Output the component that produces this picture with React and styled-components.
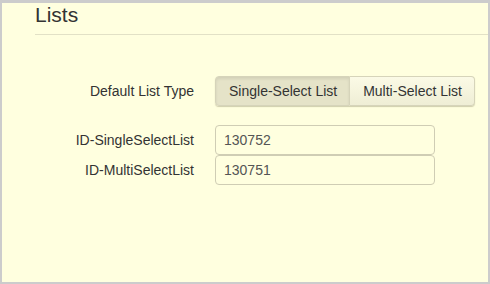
import React, { useState } from "react";
import styled, { createGlobalStyle } from "styled-components";

const Global = createGlobalStyle`
  body {
    margin: 0;
    background: #ffffdf;
    font-family: "Liberation Sans", Arial, sans-serif;
  }
`;

const Frame = styled.div`
  box-sizing: border-box;
  width: 490px;
  height: 284px;
  background: #ffffdf;
  border-style: solid;
  border-color: #cccccc;
  border-width: 3px 2px 2px 2px;
  color: #333333;
`;

const Header = styled.div`
  margin-left: 33px;
  height: 31px;
  border-bottom: 1px solid #e2e1c6;
`;

const Title = styled.h1`
  margin: 0;
  font-weight: normal;
  font-size: 21px;
  line-height: 24px;
`;

const Form = styled.div`
  display: grid;
  grid-template-columns: 192px auto;
  column-gap: 21px;
  align-items: center;
  padding-top: 41px;
`;

const Label = styled.div`
  text-align: right;
  font-size: 14px;
  margin-top: ${(p) => p.$top || 0}px;
`;

const Group = styled.div`
  display: inline-flex;
  justify-self: start;
  border-radius: 4px;
  box-shadow: 0 1px 1px rgba(120, 115, 80, 0.35);
  margin-bottom: 19px;
`;

const Choice = styled.button`
  font-family: inherit;
  font-size: 14px;
  color: #333;
  height: 30px;
  padding: 0 12px 0 13px;
  border: 1px solid #d6d4ba;
  cursor: pointer;
  background: ${(p) =>
    p.$active ? "#e5e3c8" : "linear-gradient(#fbfae6, #efeed5)"};
  box-shadow: ${(p) => (p.$active ? "inset 0 2px 3px rgba(0,0,0,0.08)" : "none")};
  &:first-child {
    border-radius: 4px 0 0 4px;
  }
  &:last-child {
    border-radius: 0 4px 4px 0;
    border-left: none;
  }
`;

const Input = styled.input`
  box-sizing: border-box;
  width: 220px;
  height: 30px;
  padding: 0 8px;
  font-family: inherit;
  font-size: 14px;
  color: #555;
  background: #ffffdf;
  border: 1px solid #cfcdb4;
  border-radius: 4px;
  outline: none;
`;

export default function App() {
  const [type, setType] = useState("single");
  return (
    <Frame>
      <Global />
      <Header>
        <Title>Lists</Title>
      </Header>
      <Form>
        <Label $top={-19}>Default List Type</Label>
        <Group>
          <Choice $active={type === "single"} onClick={() => setType("single")}>
            Single-Select List
          </Choice>
          <Choice $active={type === "multi"} onClick={() => setType("multi")}>
            Multi-Select List
          </Choice>
        </Group>
        <Label>ID-SingleSelectList</Label>
        <Input defaultValue="130752" />
        <Label>ID-MultiSelectList</Label>
        <Input defaultValue="130751" />
      </Form>
    </Frame>
  );
}
